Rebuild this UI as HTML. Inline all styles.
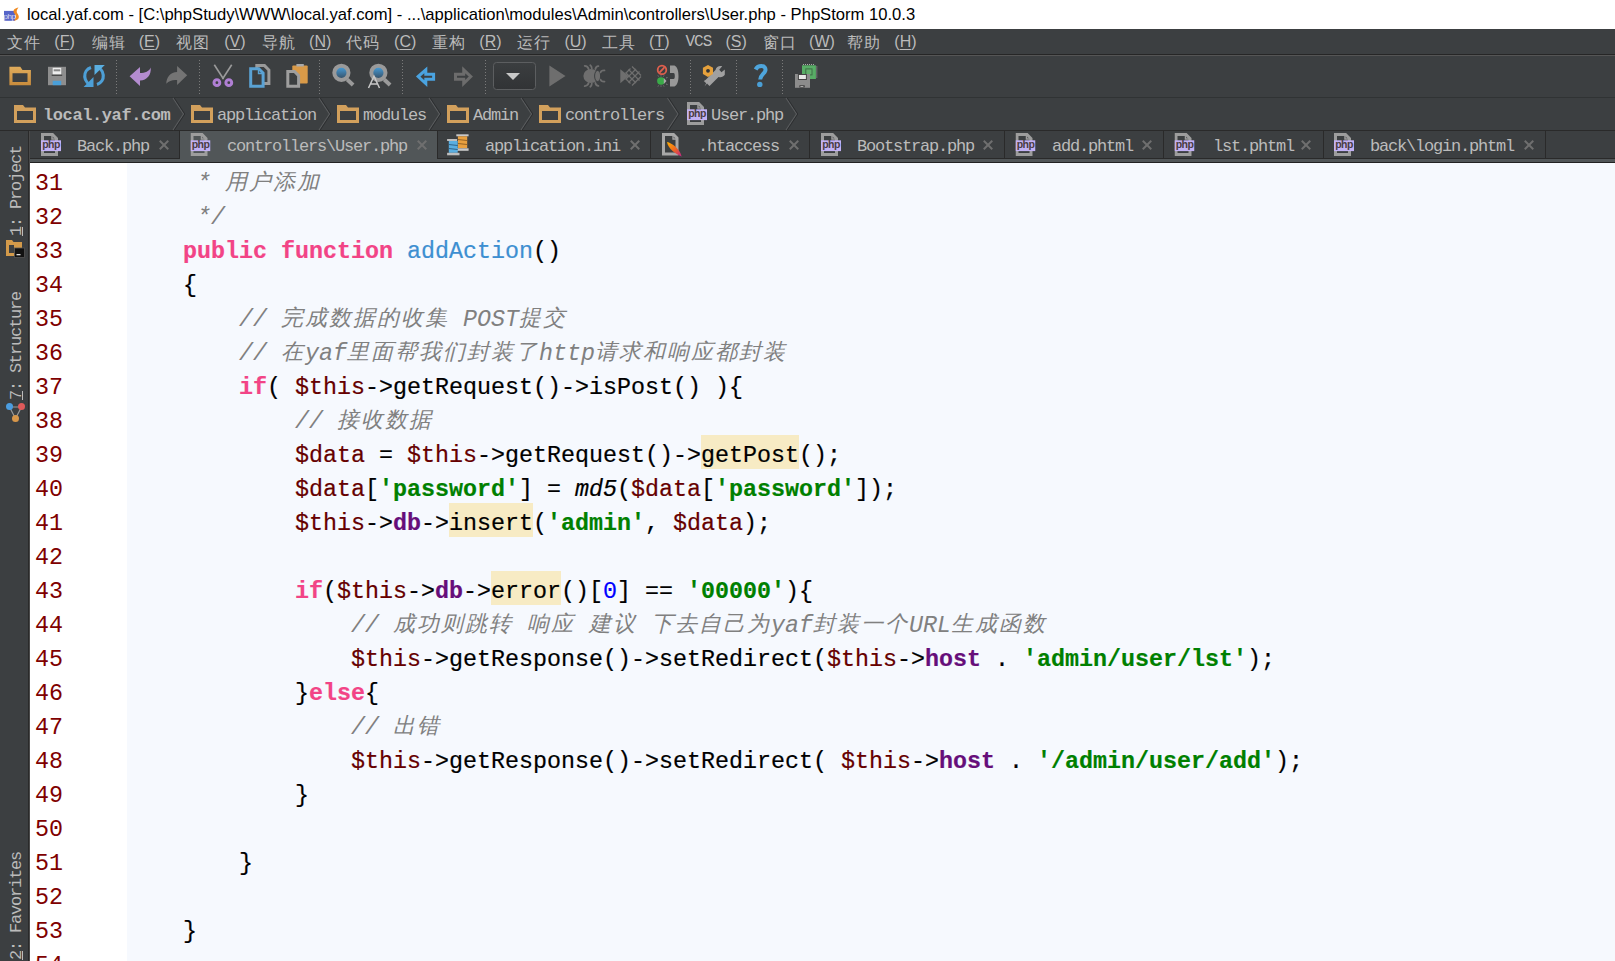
<!DOCTYPE html>
<html><head><meta charset="utf-8">
<style>
*{margin:0;padding:0;box-sizing:border-box}
html,body{width:1615px;height:961px;overflow:hidden;background:#fff;position:relative;font-family:"Liberation Sans",sans-serif}
.a{position:absolute}
#title{left:0;top:0;width:1615px;height:29px;background:#fff}
#title .t{left:27px;top:5px;font-size:16.6px;color:#000;white-space:nowrap}
#menu{left:0;top:29px;width:1615px;height:25px;background:#3c3f41}
#menu .m{top:3px;font-size:15px;color:#bbb;white-space:nowrap}
#sep1{left:0;top:54px;width:1615px;height:1px;background:#262626}
#sep1b{left:0;top:55px;width:1615px;height:1px;background:#555}
#tool{left:0;top:56px;width:1615px;height:41px;background:#3c3f41}
.dsep{position:absolute;top:60px;width:1px;height:36px;background-image:linear-gradient(#7a7a7a 1px,transparent 1px);background-size:1px 3px}
#sep2{left:0;top:97px;width:1615px;height:1px;background:#303334}
#nav{left:0;top:98px;width:1615px;height:32px;background:#3c3f41}
#sep3{left:0;top:130px;width:1615px;height:1px;background:#2a2a2a}
#tabs{left:30px;top:131px;width:1585px;height:27px;background:#3c3f41}
.tsep{position:absolute;top:131px;width:1px;height:28px;background:#2a2a2a}
#acttab{left:180px;top:131px;width:257px;height:28px;background:#515658}
#tabline{left:30px;top:158px;width:1585px;height:1px;background:#2a2a2a}
#tabband{left:30px;top:159px;width:1585px;height:3px;background:#515658}
#tabline2{left:30px;top:162px;width:1585px;height:1px;background:#222}
#side{left:0;top:131px;width:28px;height:830px;background:#3c3f41}
#sideline{left:28px;top:131px;width:1px;height:830px;background:#2a2a2a}
#sideline2{left:29px;top:131px;width:1px;height:830px;background:#4a4a4a}
#gutter{left:30px;top:163px;width:97px;height:798px;background:#fff}
#code{left:127px;top:163px;width:1488px;height:798px;background:#f6f9fe}
.ln{position:absolute;left:35px;padding-top:4px;font-family:"Liberation Mono",monospace;font-size:23.33px;color:#800000;line-height:34px;height:34px}
.cl{position:absolute;left:127px;padding-top:4px;-webkit-text-stroke:0.2px currentColor;font-family:"Liberation Mono",monospace;font-size:23.33px;color:#000;line-height:34px;height:34px;white-space:pre}
.cm{color:#808080;font-style:italic;-webkit-text-stroke:0}
.kw{color:#f24486;font-weight:bold}
.fn{color:#3d8fd1}
.v{color:#660000}
.s{color:#008000;font-weight:bold}
.p{color:#660e7a;font-weight:bold}
.n{color:#0000ff}
.it{font-style:italic}
.hl{}
.hlb{position:absolute;height:34px;background:#f7ebc4}
.cj{-webkit-text-stroke:0;font-size:22px;letter-spacing:2px;font-weight:300;position:relative;top:-1px}

#menu .mc{top:5px;font-size:16px;letter-spacing:1px;font-weight:300;color:#bbb;line-height:17px;white-space:nowrap}
#menu .mk{top:4px;font-family:"Liberation Sans",sans-serif;font-size:16px;color:#bbb;line-height:17px;white-space:nowrap}
#menu .mv{top:5px;font-family:"Liberation Mono",monospace;font-size:16px;letter-spacing:-1px;color:#bbb;line-height:17px;white-space:nowrap}
#menu u{text-decoration:underline;text-underline-offset:2px}

.nt{position:absolute;font-family:"Liberation Mono",monospace;font-size:17px;letter-spacing:-1.2px;line-height:17px;color:#bbb;white-space:pre}
.nb{font-weight:bold;letter-spacing:-0.4px}
.tx{position:absolute;width:10px;height:10px}
.tx:before,.tx:after{content:"";position:absolute;left:-1px;top:4px;width:12px;height:2px;background:#6f6f6f;transform:rotate(45deg)}
.tx:after{transform:rotate(-45deg)}

.vt{position:absolute;font-family:"Liberation Mono",monospace;font-size:17px;letter-spacing:-1.2px;line-height:17px;color:#bbb;white-space:pre;transform-origin:0 0;transform:rotate(-90deg)}
.vt u{text-decoration:underline;text-underline-offset:1px}
</style></head><body>
<div id="title" class="a"><div class="a t">local.yaf.com - [C:\phpStudy\WWW\local.yaf.com] - ...\application\modules\Admin\controllers\User.php - PhpStorm 10.0.3</div></div>
<div id="menu" class="a">
<div class="a mc" style="left:7.0px">文件</div>
<div class="a mk" style="left:54.3px">(<u>F</u>)</div>
<div class="a mc" style="left:91.6px">编辑</div>
<div class="a mk" style="left:138.7px">(<u>E</u>)</div>
<div class="a mc" style="left:176.1px">视图</div>
<div class="a mk" style="left:224.2px">(<u>V</u>)</div>
<div class="a mc" style="left:261.6px">导航</div>
<div class="a mk" style="left:309.1px">(<u>N</u>)</div>
<div class="a mc" style="left:346.3px">代码</div>
<div class="a mk" style="left:394.1px">(<u>C</u>)</div>
<div class="a mc" style="left:431.5px">重构</div>
<div class="a mk" style="left:479.3px">(<u>R</u>)</div>
<div class="a mc" style="left:516.6px">运行</div>
<div class="a mk" style="left:564.4px">(<u>U</u>)</div>
<div class="a mc" style="left:601.6px">工具</div>
<div class="a mk" style="left:649.1px">(<u>T</u>)</div>
<div class="a mv" style="left:685.5px">VCS</div>
<div class="a mk" style="left:725.4px">(<u>S</u>)</div>
<div class="a mc" style="left:762.6px">窗口</div>
<div class="a mk" style="left:809.1px">(<u>W</u>)</div>
<div class="a mc" style="left:846.6px">帮助</div>
<div class="a mk" style="left:894.3px">(<u>H</u>)</div>
</div>
<div id="sep1" class="a"></div>
<div id="sep1b" class="a"></div>
<div id="tool" class="a"></div>
<div class="dsep" style="left:116px"></div><div class="dsep" style="left:199px"></div><div class="dsep" style="left:319px"></div><div class="dsep" style="left:402px"></div><div class="dsep" style="left:485px"></div><div class="dsep" style="left:690px"></div><div class="dsep" style="left:736px"></div><div class="dsep" style="left:782px"></div>
<div id="sep2" class="a"></div>
<div id="nav" class="a"></div>
<div id="sep3" class="a"></div>
<div id="side" class="a"></div>
<div id="sideline" class="a"></div>
<div id="sideline2" class="a"></div>
<div id="tabs" class="a"></div>
<div id="tabline" class="a"></div>
<div id="acttab" class="a"></div>
<div class="tsep" style="left:179px"></div><div class="tsep" style="left:437px"></div><div class="tsep" style="left:650px"></div><div class="tsep" style="left:809px"></div><div class="tsep" style="left:1004px"></div><div class="tsep" style="left:1163px"></div><div class="tsep" style="left:1323px"></div><div class="tsep" style="left:1545px"></div>
<div id="tabband" class="a"></div>
<div id="tabline2" class="a"></div>
<!--NAV-->
<div class="nt nb" style="left:43px;top:107px">local.yaf.com</div>
<div class="nt" style="left:217px;top:107px">application</div>
<div class="nt" style="left:363px;top:107px">modules</div>
<div class="nt" style="left:473px;top:107px">Admin</div>
<div class="nt" style="left:565px;top:107px">controllers</div>
<div class="nt" style="left:711px;top:107px">User.php</div>
<div class="nt" style="left:77px;top:138px">Back.php</div>
<div class="tx" style="left:159px;top:140px"></div>
<div class="nt" style="left:227px;top:138px">controllers\User.php</div>
<div class="tx" style="left:417px;top:140px"></div>
<div class="nt" style="left:485px;top:138px">application.ini</div>
<div class="tx" style="left:630px;top:140px"></div>
<div class="nt" style="left:698px;top:138px">.htaccess</div>
<div class="tx" style="left:789px;top:140px"></div>
<div class="nt" style="left:857px;top:138px">Bootstrap.php</div>
<div class="tx" style="left:983px;top:140px"></div>
<div class="nt" style="left:1052px;top:138px">add.phtml</div>
<div class="tx" style="left:1142px;top:140px"></div>
<div class="nt" style="left:1213px;top:138px">lst.phtml</div>
<div class="tx" style="left:1301px;top:140px"></div>
<div class="nt" style="left:1370px;top:138px">back\login.phtml</div>
<div class="tx" style="left:1524px;top:140px"></div>
<!--/NAV-->
<!--SVG-->
<svg class="a" style="left:0;top:0" width="1615" height="163" viewBox="0 0 1615 163">
<defs>
<linearGradient id="gFold" x1="0" y1="0" x2="0" y2="1"><stop offset="0" stop-color="#e0ac5c"/><stop offset="1" stop-color="#c98c3c"/></linearGradient>
<linearGradient id="gLens" x1="0" y1="0" x2="0" y2="1"><stop offset="0" stop-color="#4aa6e6"/><stop offset="1" stop-color="#34485a"/></linearGradient>
<linearGradient id="gDrop" x1="0" y1="0" x2="0" y2="1"><stop offset="0" stop-color="#3b3e40"/><stop offset="1" stop-color="#313335"/></linearGradient>
<linearGradient id="gFeather" x1="0" y1="0" x2="1" y2="1"><stop offset="0" stop-color="#ffb000"/><stop offset="0.5" stop-color="#f06a20"/><stop offset="1" stop-color="#c0208a"/></linearGradient>
<symbol id="php" viewBox="0 0 20 23">
 <path d="M1.5,21.5 V1.5 H11.5 L15.5,5.5 V21.5 Z" fill="none" stroke="#9d9d9d" stroke-width="3"/>
 <path d="M11,0.5 V6 H16.5" fill="none" stroke="#9d9d9d" stroke-width="1.5"/>
 <rect x="0" y="7.3" width="20" height="10.8" fill="#c2b1f4"/>
 <text x="10" y="15.3" text-anchor="middle" font-family="Liberation Sans" font-size="10.5" font-weight="bold" fill="#4a3c42" letter-spacing="-0.5">php</text>
</symbol>
<symbol id="fold" viewBox="0 0 22 18">
 <path d="M0,0 H9 L11,2.5 H22 V18 H0 Z M3,6 V15 H19 V6 Z" fill="#d2a05c" fill-rule="evenodd"/>
</symbol>
</defs>
<!-- toolbar separators -->
<!-- open folder -->
<path d="M9.4,66.8 H20.3 L22.5,69.9 H30.9 V85.2 H9.4 Z M12.5,73.3 V82.1 H27.5 V73.3 Z" fill="url(#gFold)" fill-rule="evenodd"/>
<!-- save -->
<path d="M48,66.8 H66 V85.2 H48 Z" fill="#8e8e8e"/>
<rect x="52.7" y="67.8" width="8.5" height="6.8" fill="#eee"/>
<rect x="53.7" y="69.3" width="6.5" height="2" fill="#888"/>
<rect x="51.7" y="74.6" width="10.5" height="1.3" fill="#444"/>
<rect x="52.7" y="80.8" width="8.5" height="4.4" fill="#4a9fd8"/>
<!-- sync -->
<g fill="none" stroke="#4d9fd6" stroke-width="3.2">
<path d="M92.5,85 A9,9 0 0 1 91,67.5"/>
<path d="M95.5,67 A9,9 0 0 1 97,84.5"/>
</g>
<path d="M83.6,86.9 L93.5,86.9 L93.5,77 Z" fill="#4d9fd6"/>
<path d="M104.8,65.1 L94.5,65.1 L94.5,75 Z" fill="#5aaee0"/>
<!-- undo -->
<path d="M129.6,76.3 L140,67 L140,73 C145,73 149.5,71 150.7,67.4 C151.5,75 146.5,80.6 140,80.4 L140,86 Z" fill="#b48cd0"/>
<!-- redo -->
<path d="M187.2,75.2 L177.1,66 L177.1,71.9 C170.5,72 166.3,77 166.3,83.8 C169,80.5 173,79.6 177.1,80 L177.1,84.9 Z" fill="#747474"/>
<!-- cut -->
<g stroke="#9a9a9a" stroke-width="1.6" fill="none"><path d="M214.3,64.8 L223.5,79"/><path d="M231.7,64.8 L222.5,79"/></g>
<g fill="none" stroke="#b07fd4" stroke-width="3"><circle cx="216.9" cy="82.7" r="2.9"/><circle cx="228.8" cy="82.7" r="2.9"/></g>
<!-- copy -->
<path d="M256.8,83.4 V65.6 H264.5 L268.9,70 V83.4 Z" fill="none" stroke="#9a9a9a" stroke-width="3"/>
<path d="M250.7,86.2 V68.7 H258.8 L263.1,73 V86.2 Z" fill="#3c3f41" stroke="#5aa2d4" stroke-width="3"/>
<path d="M258.5,68 V73.5 H264" fill="none" stroke="#5aa2d4" stroke-width="1.4"/>
<!-- paste -->
<rect x="292.3" y="65.5" width="15.4" height="18.1" fill="#d99a48" rx="1"/>
<rect x="296.4" y="64" width="7.4" height="2.5" fill="#aaa"/>
<path d="M287.8,86.2 V71.5 H294.5 L298.6,75.6 V86.2 Z" fill="#3c3f41" stroke="#9e9e9e" stroke-width="3"/>
<!-- find -->
<circle cx="341.4" cy="72.8" r="7.1" fill="url(#gLens)" stroke="#9a9a9a" stroke-width="4"/>
<path d="M347.2,79.5 L353.1,84.9" stroke="#9a9a9a" stroke-width="4"/>
<!-- replace -->
<circle cx="378.4" cy="72.8" r="7.1" fill="url(#gLens)" stroke="#9a9a9a" stroke-width="4"/>
<path d="M384.2,79.5 L390.1,84.9" stroke="#9a9a9a" stroke-width="4"/>
<path d="M368.5,88 L374,76.2 L379.5,88 M370.5,84 H377.5" stroke="#c8c8c8" stroke-width="1.5" fill="none"/>
<!-- back -->
<path d="M418.2,76.5 L425.8,69.8 V74.3 H433.6 V79.3 H425.8 V83.5 Z" fill="none" stroke="#4aa3e0" stroke-width="3" stroke-linejoin="miter"/>
<!-- forward -->
<path d="M470.8,76.5 L463.7,69.8 V74.3 H455.5 V79.3 H463.7 V83.5 Z" fill="none" stroke="#6c6c6c" stroke-width="3"/>
<!-- dropdown -->
<rect x="493.5" y="62.5" width="42" height="27" rx="3" fill="url(#gDrop)" stroke="#5c5e60" stroke-width="1"/>
<path d="M506,73 H520 L513,80 Z" fill="#c8c8c8"/>
<!-- run -->
<path d="M549.4,65.5 L565.5,76 L549.4,86.6 Z" fill="#6e6e6e"/>
<!-- debug -->
<ellipse cx="591" cy="76" rx="7.6" ry="7" fill="#6e6e6e"/>
<ellipse cx="597.6" cy="76" rx="3" ry="5.6" fill="#6e6e6e" stroke="#3c3f41" stroke-width="1"/>
<g stroke="#6e6e6e" stroke-width="1.8" fill="none" stroke-linecap="round">
<path d="M584.7,65.9 C586.5,66 588,66.8 588.7,69.2"/><path d="M590.3,65.3 C591.3,66 591.8,67 591.8,68.5"/><path d="M598.4,66.1 C597,66.2 595.8,67 595.4,69"/>
<path d="M584.7,86.1 C586.5,86 588,85.2 588.7,82.8"/><path d="M590.3,86.7 C591.3,86 591.8,85 591.8,83.5"/><path d="M598.4,85.9 C597,85.8 595.8,85 595.4,83"/>
<path d="M604.5,70.4 C602.5,70.3 601,70.8 600.6,72.4"/><path d="M604.5,81.6 C602.5,81.7 601,81.2 600.6,79.6"/>
</g>
<!-- coverage -->
<path d="M620.3,69.2 L628.8,76 L620.3,83.2 Z" fill="#6e6e6e"/>
<g stroke="#6e6e6e" stroke-width="1.3" fill="none">
<path d="M625.5,72.5 L636,83 M628.5,69.5 L639.5,80.5 M632,66.5 L641,75.5 M626,79 L630.5,83.5"/>
<path d="M625.5,79.5 L636,69 M628.5,82.5 L639.5,71.5 M632,85.5 L641,76.5 M626,73 L630.5,68.5"/>
</g>
<!-- attach -->
<circle cx="662" cy="69.9" r="4.3" fill="none" stroke="#e0604e" stroke-width="1.8"/>
<path d="M659.5,72.6 L664.6,67.2" stroke="#e0604e" stroke-width="1.8"/>
<ellipse cx="661" cy="81" rx="3.9" ry="3.7" fill="#3aaa48"/>
<path d="M663.8,78 L666.5,81 L663.8,84 Z" fill="#aaa"/>
<g stroke="#888" stroke-width="0.8"><path d="M658.5,76.5 L658,75.5 M661,76.5 V75.3 M663.5,76.5 L664,75.5 M658.5,85.5 L658,86.5 M661,85.5 V86.7 M663.5,85.5 L664,86.5 M666,78 L667.5,77.5 M666,84 L667.5,84.5"/></g>
<path d="M670,65.5 L674.5,65.5 C677.5,67 678.5,71 678.5,76 C678.5,81 677.5,85 674.5,86.5 L670,86.5 L670,79 L673.5,79 C674.5,79 674.8,78 674.8,76 C674.8,74 674.5,73 673.5,73 L670,73 Z" fill="#999"/>
<!-- settings -->
<path d="M704.5,86.5 L707,83.5 L709.5,86 L718.5,77 C721,77.8 723.5,77 724.8,74.8 L724.8,69.5 L721.5,72.2 L719.2,69.8 L722.2,66.2 C719.5,65.5 716,66.5 715.5,70 L705.8,79.7 L703.8,81 L706.2,83.2 Z" fill="#a0a0a0"/>
<path d="M708,64.9 L713,67.8 V74 L708,76.9 L702.9,74 V67.8 Z" fill="#e5a13c"/>
<circle cx="708" cy="70.8" r="1.9" fill="#2f3336"/>
<!-- help -->
<path d="M755.6,69.5 C757,66.8 759.5,66.1 761.5,66.1 C764.5,66.1 766,68 765.3,70.8 C764.5,73.8 760.2,75 760.2,79.6" fill="none" stroke="#4ea5dc" stroke-width="4"/>
<circle cx="759.8" cy="84.4" r="2.7" fill="#4a9fd6"/>
<!-- last -->
<rect x="802" y="65.3" width="13.9" height="13.7" fill="#58ad66"/>
<g fill="#aaa"><rect x="803" y="64" width="1" height="1"/><rect x="805" y="64" width="1" height="1"/><rect x="807" y="64" width="1" height="1"/><rect x="809" y="64" width="1" height="1"/><rect x="811" y="64" width="1" height="1"/><rect x="813" y="64" width="1" height="1"/>
<rect x="816.3" y="66.5" width="1" height="1"/><rect x="816.3" y="68.5" width="1" height="1"/><rect x="816.3" y="70.5" width="1" height="1"/><rect x="816.3" y="72.5" width="1" height="1"/><rect x="816.3" y="74.5" width="1" height="1"/><rect x="816.3" y="76.5" width="1" height="1"/></g>
<rect x="805.8" y="68.9" width="6.2" height="6" fill="#62b06c" stroke="#3e6e46" stroke-width="1"/>
<path d="M795,74 H810 V87.8 H795 Z" fill="#8c8c8c"/>
<rect x="798.4" y="74.5" width="8" height="5" fill="#e8e8e8" stroke="#444" stroke-width="1"/>
<rect x="799.4" y="85.3" width="5.3" height="2.2" fill="#3a3a3a"/>
<rect x="800.4" y="86" width="3" height="0.8" fill="#ccc"/>
<!--ICONS-->
<path d="M173,98 L183.5,114 L173,130" fill="none" stroke="#5a5c5e" stroke-width="1.1"/><path d="M174.3,98 L184.8,114 L174.3,130" fill="none" stroke="#2c2e30" stroke-width="1"/>
<path d="M319,98 L329.5,114 L319,130" fill="none" stroke="#5a5c5e" stroke-width="1.1"/><path d="M320.3,98 L330.8,114 L320.3,130" fill="none" stroke="#2c2e30" stroke-width="1"/>
<path d="M429,98 L439.5,114 L429,130" fill="none" stroke="#5a5c5e" stroke-width="1.1"/><path d="M430.3,98 L440.8,114 L430.3,130" fill="none" stroke="#2c2e30" stroke-width="1"/>
<path d="M521,98 L531.5,114 L521,130" fill="none" stroke="#5a5c5e" stroke-width="1.1"/><path d="M522.3,98 L532.8,114 L522.3,130" fill="none" stroke="#2c2e30" stroke-width="1"/>
<path d="M667.5,98 L678.0,114 L667.5,130" fill="none" stroke="#5a5c5e" stroke-width="1.1"/><path d="M668.8,98 L679.3,114 L668.8,130" fill="none" stroke="#2c2e30" stroke-width="1"/>
<path d="M786,98 L796.5,114 L786,130" fill="none" stroke="#5a5c5e" stroke-width="1.1"/><path d="M787.3,98 L797.8,114 L787.3,130" fill="none" stroke="#2c2e30" stroke-width="1"/>
<use href="#fold" x="14" y="105" width="22" height="18"/>
<use href="#fold" x="191" y="105" width="22" height="18"/>
<use href="#fold" x="337" y="105" width="22" height="18"/>
<use href="#fold" x="447" y="105" width="22" height="18"/>
<use href="#fold" x="539" y="105" width="22" height="18"/>
<use href="#php" x="687" y="102" width="20" height="23"/>
<use href="#php" x="41" y="133" width="20" height="23"/>
<use href="#php" x="190.5" y="133" width="20" height="23"/>
<use href="#php" x="821" y="133" width="20" height="23"/>
<use href="#php" x="1015.5" y="133" width="20" height="23"/>
<use href="#php" x="1174.5" y="133" width="20" height="23"/>
<use href="#php" x="1334" y="133" width="20" height="23"/>
<g>
<rect x="456.3" y="134.3" width="12.3" height="2" fill="#c8c8c8"/>
<rect x="457.9" y="136.3" width="9.3" height="11.8" fill="#e8a040"/>
<path d="M457.9,139.5 L467.2,140.5 M457.9,143.5 L467.2,144.5" stroke="#8a5a20" stroke-width="0.9"/>
<rect x="456.3" y="148.3" width="12.3" height="2.5" fill="#c8c8c8"/>
<rect x="447.1" y="139" width="10" height="2" fill="#bdbdbd"/>
<rect x="448.8" y="141" width="8.9" height="11.8" fill="#5aaee0"/>
<path d="M448.8,144.5 L457.7,145.5 M448.8,148.5 L457.7,149.5" stroke="#2a5a80" stroke-width="0.9"/>
<rect x="447.1" y="152.8" width="12.4" height="2.5" fill="#bdbdbd"/>
</g>
<path d="M663.5,154 V134.5 H673.5 L677,138 V154 Z" fill="none" stroke="#a8a8a8" stroke-width="3"/>
<path d="M673,134 V139 H677.5" fill="none" stroke="#a8a8a8" stroke-width="1.3"/>
<path d="M667,142 C672,143 680,149 681.6,156.6 C676,154 668,149 667,142 Z" fill="url(#gFeather)"/>
<!--/ICONS-->
</svg>
<!--/SVG-->
<div id="gutter" class="a"></div>
<div id="code" class="a"></div>
<div class="hlb" style="left:701px;top:435px;width:98px"></div>
<div class="hlb" style="left:449px;top:503px;width:84px"></div>
<div class="hlb" style="left:491px;top:571px;width:70px"></div>
<!--SIDE-->
<div class="vt" style="left:7.5px;top:236px"><u>1</u>: Project</div>
<div class="vt" style="left:7.5px;top:400px"><u>7</u>: Structure</div>
<div class="vt" style="left:7.5px;top:960px"><u>2</u>: Favorites</div>
<svg class="a" style="left:0;top:230px" width="30" height="200" viewBox="0 230 30 200">
<path d="M6,240 H12 L13.5,242 H22 V256 H6 Z M9,245 V253 H14 V245 Z" fill="#d39a4a" fill-rule="evenodd"/>
<rect x="14.5" y="248" width="10" height="9.5" fill="#111" stroke="#555" stroke-width="0.8"/>
<rect x="16.5" y="254" width="4" height="1.3" fill="#ddd"/>
<path d="M9.5,407 L15.5,418.5 L21.5,407 Z" fill="none" stroke="#999" stroke-width="1.2"/>
<circle cx="9.5" cy="406.5" r="3.5" fill="#4b9de0"/>
<circle cx="21.5" cy="406.5" r="3.5" fill="#e05a5a"/>
<circle cx="15.5" cy="418.5" r="3.5" fill="#d8974a"/>
</svg>
<svg class="a" style="left:0;top:0" width="24" height="29" viewBox="0 0 24 29">
<rect x="4" y="10.9" width="11" height="9.9" fill="#5564c8"/>
<text x="9.5" y="18.6" text-anchor="middle" font-family="Liberation Sans" font-size="8" fill="#dde" letter-spacing="-0.5">php</text>
<path d="M18.5,7.5 C15,8 12.5,10 14,13 C15.5,15.5 17.5,16 14,20.5 C18,20.5 19.5,18 18.5,15.5 C17.5,13 15,12 18.5,7.5 Z" fill="#f08a20"/>
</svg>
<!--/SIDE-->
<!--LINES-->
<div class="ln" style="top:163px">31</div>
<div class="cl" style="top:163px">     <span class="cm">* <span class="cj">用户添加</span></span></div>
<div class="ln" style="top:197px">32</div>
<div class="cl" style="top:197px">     <span class="cm">*/</span></div>
<div class="ln" style="top:231px">33</div>
<div class="cl" style="top:231px">    <span class="kw">public</span> <span class="kw">function</span> <span class="fn">addAction</span>()</div>
<div class="ln" style="top:265px">34</div>
<div class="cl" style="top:265px">    {</div>
<div class="ln" style="top:299px">35</div>
<div class="cl" style="top:299px">        <span class="cm">// <span class="cj">完成数据的收集</span> POST<span class="cj">提交</span></span></div>
<div class="ln" style="top:333px">36</div>
<div class="cl" style="top:333px">        <span class="cm">// <span class="cj">在</span>yaf<span class="cj">里面帮我们封装了</span>http<span class="cj">请求和响应都封装</span></span></div>
<div class="ln" style="top:367px">37</div>
<div class="cl" style="top:367px">        <span class="kw">if</span>( <span class="v">$this</span>-&gt;getRequest()-&gt;isPost() ){</div>
<div class="ln" style="top:401px">38</div>
<div class="cl" style="top:401px">            <span class="cm">// <span class="cj">接收数据</span></span></div>
<div class="ln" style="top:435px">39</div>
<div class="cl" style="top:435px">            <span class="v">$data</span> = <span class="v">$this</span>-&gt;getRequest()-&gt;<span class="hl">getPost</span>();</div>
<div class="ln" style="top:469px">40</div>
<div class="cl" style="top:469px">            <span class="v">$data</span>[<span class="s">'password'</span>] = <span class="it">md5</span>(<span class="v">$data</span>[<span class="s">'password'</span>]);</div>
<div class="ln" style="top:503px">41</div>
<div class="cl" style="top:503px">            <span class="v">$this</span>-&gt;<span class="p">db</span>-&gt;<span class="hl">insert</span>(<span class="s">'admin'</span>, <span class="v">$data</span>);</div>
<div class="ln" style="top:537px">42</div>
<div class="cl" style="top:537px"></div>
<div class="ln" style="top:571px">43</div>
<div class="cl" style="top:571px">            <span class="kw">if</span>(<span class="v">$this</span>-&gt;<span class="p">db</span>-&gt;<span class="hl">error</span>()[<span class="n">0</span>] == <span class="s">'00000'</span>){</div>
<div class="ln" style="top:605px">44</div>
<div class="cl" style="top:605px">                <span class="cm">// <span class="cj">成功则跳转</span> <span class="cj">响应</span> <span class="cj">建议</span> <span class="cj">下去自己为</span>yaf<span class="cj">封装一个</span>URL<span class="cj">生成函数</span></span></div>
<div class="ln" style="top:639px">45</div>
<div class="cl" style="top:639px">                <span class="v">$this</span>-&gt;getResponse()-&gt;setRedirect(<span class="v">$this</span>-&gt;<span class="p">host</span> . <span class="s">'admin/user/lst'</span>);</div>
<div class="ln" style="top:673px">46</div>
<div class="cl" style="top:673px">            }<span class="kw">else</span>{</div>
<div class="ln" style="top:707px">47</div>
<div class="cl" style="top:707px">                <span class="cm">// <span class="cj">出错</span></span></div>
<div class="ln" style="top:741px">48</div>
<div class="cl" style="top:741px">                <span class="v">$this</span>-&gt;getResponse()-&gt;setRedirect( <span class="v">$this</span>-&gt;<span class="p">host</span> . <span class="s">'/admin/user/add'</span>);</div>
<div class="ln" style="top:775px">49</div>
<div class="cl" style="top:775px">            }</div>
<div class="ln" style="top:809px">50</div>
<div class="cl" style="top:809px"></div>
<div class="ln" style="top:843px">51</div>
<div class="cl" style="top:843px">        }</div>
<div class="ln" style="top:877px">52</div>
<div class="cl" style="top:877px"></div>
<div class="ln" style="top:911px">53</div>
<div class="cl" style="top:911px">    }</div>
<div class="ln" style="top:945px">54</div>
<div class="cl" style="top:945px"></div>
<!--/LINES-->
</body></html>
